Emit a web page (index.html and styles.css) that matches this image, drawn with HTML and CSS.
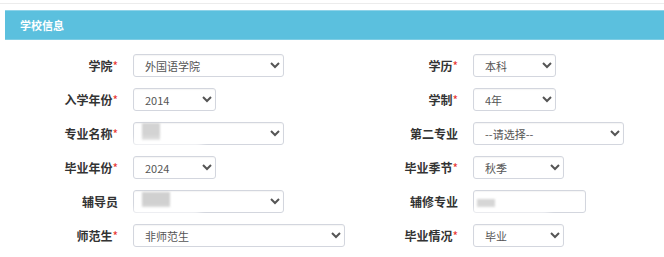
FILE: index.html
```html
<!DOCTYPE html>
<html lang="zh-CN">
<head>
    <meta charset="UTF-8">
    <title>学校信息</title>
    <link rel="stylesheet" href="styles.css">
</head>
<body>

<div class="topline"></div>

<div class="panel">
    <div class="panel-heading">学校信息</div>

    <form class="form-grid">
        <div class="field">
            <label class="field-label">学院<span class="req">*</span></label>
            <select class="ctl w-151"><option>外国语学院</option></select>
        </div>
        <div class="field">
            <label class="field-label">学历<span class="req">*</span></label>
            <select class="ctl w-83"><option>本科</option></select>
        </div>

        <div class="field">
            <label class="field-label">入学年份<span class="req">*</span></label>
            <select class="ctl w-83"><option>2014</option></select>
        </div>
        <div class="field">
            <label class="field-label">学制<span class="req">*</span></label>
            <select class="ctl w-83"><option>4年</option></select>
        </div>

        <div class="field">
            <label class="field-label">专业名称<span class="req">*</span></label>
            <span class="ctl-wrap">
                <select class="ctl w-151"><option></option></select>
                <span class="mask mask-major"></span>
            </span>
        </div>
        <div class="field">
            <label class="field-label">第二专业</label>
            <select class="ctl w-151"><option>--请选择--</option></select>
        </div>

        <div class="field">
            <label class="field-label">毕业年份<span class="req">*</span></label>
            <select class="ctl w-83"><option>2024</option></select>
        </div>
        <div class="field">
            <label class="field-label">毕业季节<span class="req">*</span></label>
            <select class="ctl w-91"><option>秋季</option></select>
        </div>

        <div class="field">
            <label class="field-label">辅导员</label>
            <span class="ctl-wrap">
                <select class="ctl w-151"><option></option></select>
                <span class="mask mask-tutor"></span>
            </span>
        </div>
        <div class="field">
            <label class="field-label">辅修专业</label>
            <span class="ctl-wrap">
                <input class="ctl w-113" type="text" value="">
                <span class="mask mask-minor"></span>
            </span>
        </div>

        <div class="field">
            <label class="field-label">师范生<span class="req">*</span></label>
            <select class="ctl w-212"><option>非师范生</option></select>
        </div>
        <div class="field">
            <label class="field-label">毕业情况<span class="req">*</span></label>
            <select class="ctl w-91"><option>毕业</option></select>
        </div>
    </form>
</div>

</body>
</html>
```

FILE: styles.css
```css
body {
    margin: 0;
    background: #fff;
    font-family: "Noto Sans CJK SC", "Noto Sans", sans-serif;
    color: #333;
}

.topline {
    height: 3px;
    border-bottom: 1px solid #ececec;
}

.panel {
    margin: 6px 0 0 5px;
}

.panel-heading {
    height: 28px;
    line-height: 28px;
    padding-left: 15px;
    background: #5bc0de;
    border-top: 1px solid #8ed3e9;
    border-bottom: 1px solid #7fcde4;
    color: #fff;
    font-size: 11px;
    font-weight: bold;
}

.form-grid {
    display: grid;
    grid-template-columns: 340px auto;
    row-gap: 11px;
    margin-top: 14px;
}

.field {
    display: flex;
    align-items: center;
    height: 23px;
}

.field-label {
    width: 113px;
    margin-right: 15px;
    text-align: right;
    font-size: 12px;
    font-weight: bold;
    color: #333;
}

.req {
    color: #e8332f;
    font-weight: normal;
}

.ctl {
    display: block;
    box-sizing: border-box;
    height: 23px;
    padding: 0 4px 0 7px;
    border: 1px solid #d3d6de;
    border-radius: 3px;
    background: #fff;
    box-shadow: inset 0 1px 1px rgba(0, 0, 0, 0.04);
    font-family: "Noto Sans CJK SC", "Noto Sans", sans-serif;
    font-size: 11px;
    color: #555;
    outline: none;
}

.w-83 { width: 83px; }
.w-91 { width: 91px; }
.w-113 { width: 113px; }
.w-151 { width: 151px; }
.w-212 { width: 212px; }

.ctl-wrap {
    position: relative;
    display: block;
    height: 23px;
}

.mask {
    position: absolute;
    background: #c9c9c9;
    filter: blur(1px);
}

.mask::after {
    content: "";
    position: absolute;
    background: rgba(255, 255, 255, 0.85);
    filter: blur(3px);
}

.mask-major {
    left: 9px;
    top: 1px;
    width: 18px;
    height: 17px;
    background: #d3d3d3;
}

.mask-major::after {
    left: -10px;
    top: 17px;
    width: 70px;
    height: 8px;
}

.mask-tutor {
    left: 9px;
    top: 2px;
    width: 28px;
    height: 15px;
    background: #d0d0d0;
}

.mask-tutor::after {
    left: -10px;
    top: 17px;
    width: 68px;
    height: 7px;
}

.mask-minor {
    left: 4px;
    top: 9px;
    width: 18px;
    height: 8px;
    background: #d6d6d6;
}

.mask-minor::after {
    left: -8px;
    top: 11px;
    width: 80px;
    height: 6px;
}
```
